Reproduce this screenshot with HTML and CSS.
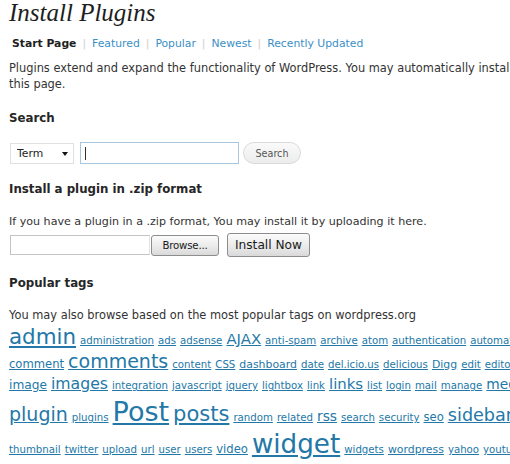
FILE: index.html
```html
<!DOCTYPE html>
<html lang="en">
<head>
<meta charset="utf-8">
<title>Install Plugins</title>
<link rel="stylesheet" href="styles.css">
</head>
<body>
<div class="wrap">
  <h2 class="title">Install Plugins</h2>
  <ul class="subnav"><li class="current">Start Page</li><li class="sep">|</li><li><a href="#">Featured</a></li><li class="sep">|</li><li><a href="#">Popular</a></li><li class="sep">|</li><li><a href="#">Newest</a></li><li class="sep">|</li><li><a href="#">Recently Updated</a></li></ul>
  <p class="intro">Plugins extend and expand the functionality of WordPress. You may automatically install plugins from the WordPress Plugin Directory or upload a plugin in .zip format via<br>this page.</p>

  <h3 class="head head-search">Search</h3>
  <form class="search-row">
    <span class="select-wrap"><select class="select"><option>Term</option><option>Author</option><option>Tag</option></select></span>
    <span class="field"><input class="text" type="text"><span class="caret"></span></span>
    <button class="btn-search" type="button">Search</button>
  </form>

  <h3 class="head head-upload">Install a plugin in .zip format</h3>
  <p class="upload-note">If you have a plugin in a .zip format, You may install it by uploading it here.</p>
  <form class="upload-row">
    <input class="file-text" type="text">
    <button class="btn-browse" type="button">Browse...</button>
    <button class="btn-install" type="button">Install Now</button>
  </form>

  <h3 class="head head-tags">Popular tags</h3>
  <p class="tags-note">You may also browse based on the most popular tags on wordpress.org</p>
  <div class="cloud">
    <div class="row r1">
      <a class="s21" href="#">admin</a><a class="s10" href="#">administration</a><a class="s10" href="#">ads</a><a class="s10" href="#">adsense</a><a class="s15" href="#">AJAX</a><a class="s10" href="#">anti-spam</a><a class="s10" href="#">archive</a><a class="s10" href="#">atom</a><a class="s10" href="#">authentication</a><a class="s10" href="#">automatic</a><a class="s14" href="#">blog</a>
    </div>
    <div class="row r2">
      <a class="s11b" href="#">comment</a><a class="s19" href="#">comments</a><a class="s10" href="#">content</a><a class="s10" href="#">CSS</a><a class="s11" href="#">dashboard</a><a class="s10" href="#">date</a><a class="s10" href="#">del.icio.us</a><a class="s10" href="#">delicious</a><a class="s11" href="#">Digg</a><a class="s10" href="#">edit</a><a class="s10" href="#">editor</a><a class="s10" href="#">email</a>
    </div>
    <div class="row r3">
      <a class="s12" href="#">image</a><a class="s16" href="#">images</a><a class="s10" href="#">integration</a><a class="s10" href="#">javascript</a><a class="s10" href="#">jquery</a><a class="s10" href="#">lightbox</a><a class="s10" href="#">link</a><a class="s15" href="#">links</a><a class="s10" href="#">list</a><a class="s10" href="#">login</a><a class="s10" href="#">mail</a><a class="s10" href="#">manage</a><a class="s14" href="#">media</a>
    </div>
    <div class="row r4">
      <a class="s19" href="#">plugin</a><a class="s10" href="#">plugins</a><a class="s27" href="#">Post</a><a class="s20" href="#">posts</a><a class="s10" href="#">random</a><a class="s10" href="#">related</a><a class="s14" href="#">rss</a><a class="s10" href="#">search</a><a class="s10" href="#">security</a><a class="s11b" href="#">seo</a><a class="s17" href="#">sidebar</a>
    </div>
    <div class="row r5">
      <a class="s10" href="#">thumbnail</a><a class="s10" href="#">twitter</a><a class="s10" href="#">upload</a><a class="s10" href="#">url</a><a class="s10" href="#">user</a><a class="s10" href="#">users</a><a class="s11b" href="#">video</a><a class="s26" href="#">widget</a><a class="s10" href="#">widgets</a><a class="s11" href="#">wordpress</a><a class="s10" href="#">yahoo</a><a class="s10" href="#">youtube</a>
    </div>
  </div>
</div>
</body>
</html>
```
FILE: styles.css
```css
html, body {
  margin: 0;
  padding: 0;
  overflow: hidden;
  background: #ffffff;
}

body {
  font-family: "DejaVu Sans", "Noto Sans", sans-serif;
  font-size: 11.4px;
  color: #333333;
}

.wrap {
  padding-left: 9px;
  white-space: nowrap;
}

.title {
  margin: 0;
  font-family: "Liberation Serif", "DejaVu Serif", serif;
  font-style: italic;
  font-weight: normal;
  font-size: 25px;
  line-height: 26px;
  color: #1e1e1e;
}

.subnav {
  list-style: none;
  margin: 10px 0 0;
  padding: 0 0 0 3px;
  font-size: 10.8px;
  line-height: 16px;
}

.subnav li {
  display: inline;
}

.subnav .current {
  font-weight: bold;
  color: #1e1e1e;
}

.subnav .sep {
  color: #cfcfcf;
  margin: 0 6px;
}

.subnav a {
  color: #3a8fc6;
  text-decoration: none;
}

.intro,
.upload-note,
.tags-note {
  margin: 8px 0 0;
  line-height: 16px;
}

.upload-note {
  margin-top: 17px;
  font-size: 11.1px;
}

.tags-note {
  margin-top: 16px;
}

.head {
  margin: 18px 0 0;
  font-size: 11.8px;
  font-weight: bold;
  line-height: 16px;
  color: #262626;
}

.head-upload {
  margin-top: 17px;
}

/* search row */
.search-row {
  display: flex;
  align-items: center;
  margin: 16px 0 0 1px;
  height: 22px;
}

.select-wrap {
  position: relative;
  display: block;
}

.select-wrap::after {
  content: "";
  position: absolute;
  right: 6px;
  top: 9px;
  border-left: 3.5px solid transparent;
  border-right: 3.5px solid transparent;
  border-top: 4px solid #111;
}

.select {
  appearance: none;
  -webkit-appearance: none;
  display: block;
  box-sizing: border-box;
  width: 64px;
  height: 21px;
  margin: 0;
  padding: 0 0 0 6px;
  border: 1px solid #e0e0e0;
  border-radius: 0;
  background: #ffffff;
  font-family: "DejaVu Sans", sans-serif;
  font-size: 10.8px;
  color: #222;
}

.field {
  position: relative;
  display: block;
  margin-left: 6px;
}

.text {
  display: block;
  box-sizing: border-box;
  width: 159px;
  height: 22px;
  margin: 0;
  border: 1px solid #a9c7de;
  background: #fff;
  outline: none;
}

.caret {
  position: absolute;
  left: 5px;
  top: 5px;
  width: 1px;
  height: 13px;
  background: #333;
}

.btn-search {
  box-sizing: border-box;
  width: 58px;
  height: 22px;
  margin-left: 4px;
  padding: 0;
  border: 1px solid #dadada;
  border-radius: 11px;
  background: linear-gradient(#fafafa, #ececec);
  font-family: "DejaVu Sans", sans-serif;
  font-size: 9.6px;
  color: #555;
}

/* upload row */
.upload-row {
  display: flex;
  align-items: center;
  margin: 3px 0 0 1px;
  height: 24px;
}

.file-text {
  display: block;
  box-sizing: border-box;
  width: 140px;
  height: 20px;
  margin: 0;
  border: 1px solid #c4c4c4;
  border-right-color: #e2e2e2;
  background: #fff;
}

.btn-browse,
.btn-install {
  box-sizing: border-box;
  margin: 0;
  padding: 0;
  border: 1px solid #8d8d8d;
  border-radius: 3px;
  background: linear-gradient(#fbfbfb, #e9e9e9 60%, #d9d9d9);
  font-family: "DejaVu Sans", sans-serif;
  color: #1a1a1a;
}

.btn-browse {
  width: 68px;
  height: 21px;
  margin-left: 1px;
  font-size: 10.2px;
  letter-spacing: -0.2px;
}

.btn-install {
  width: 83px;
  height: 24px;
  margin-left: 8px;
  font-size: 12.2px;
}

/* tag cloud */
.cloud {
  margin-top: 3px;
}

.row {
  display: flex;
  align-items: baseline;
  gap: 4px;
}

.r1 { height: 26px; }
.r2 { height: 24px; }
.r3 { height: 22px; }
.r4 { height: 33px; }
.r5 { height: 33px; }

.row a {
  flex-shrink: 0;
  line-height: 1;
  color: #2378a8;
  text-decoration: underline;
}

.s10 { font-size: 10.2px; }
.s11 { font-size: 10.9px; }
.s11b { font-size: 11.6px; }
.s12 { font-size: 12.2px; }
.s14 { font-size: 13.8px; }
.s15 { font-size: 14.9px; }
.s16 { font-size: 15.7px; }
.s17 { font-size: 17.6px; }
.s19 { font-size: 19px; }
.s20 { font-size: 21px; }
.s21 { font-size: 21.4px; }
.s26 { font-size: 26.2px; }
.s27 { font-size: 27px; }
```
